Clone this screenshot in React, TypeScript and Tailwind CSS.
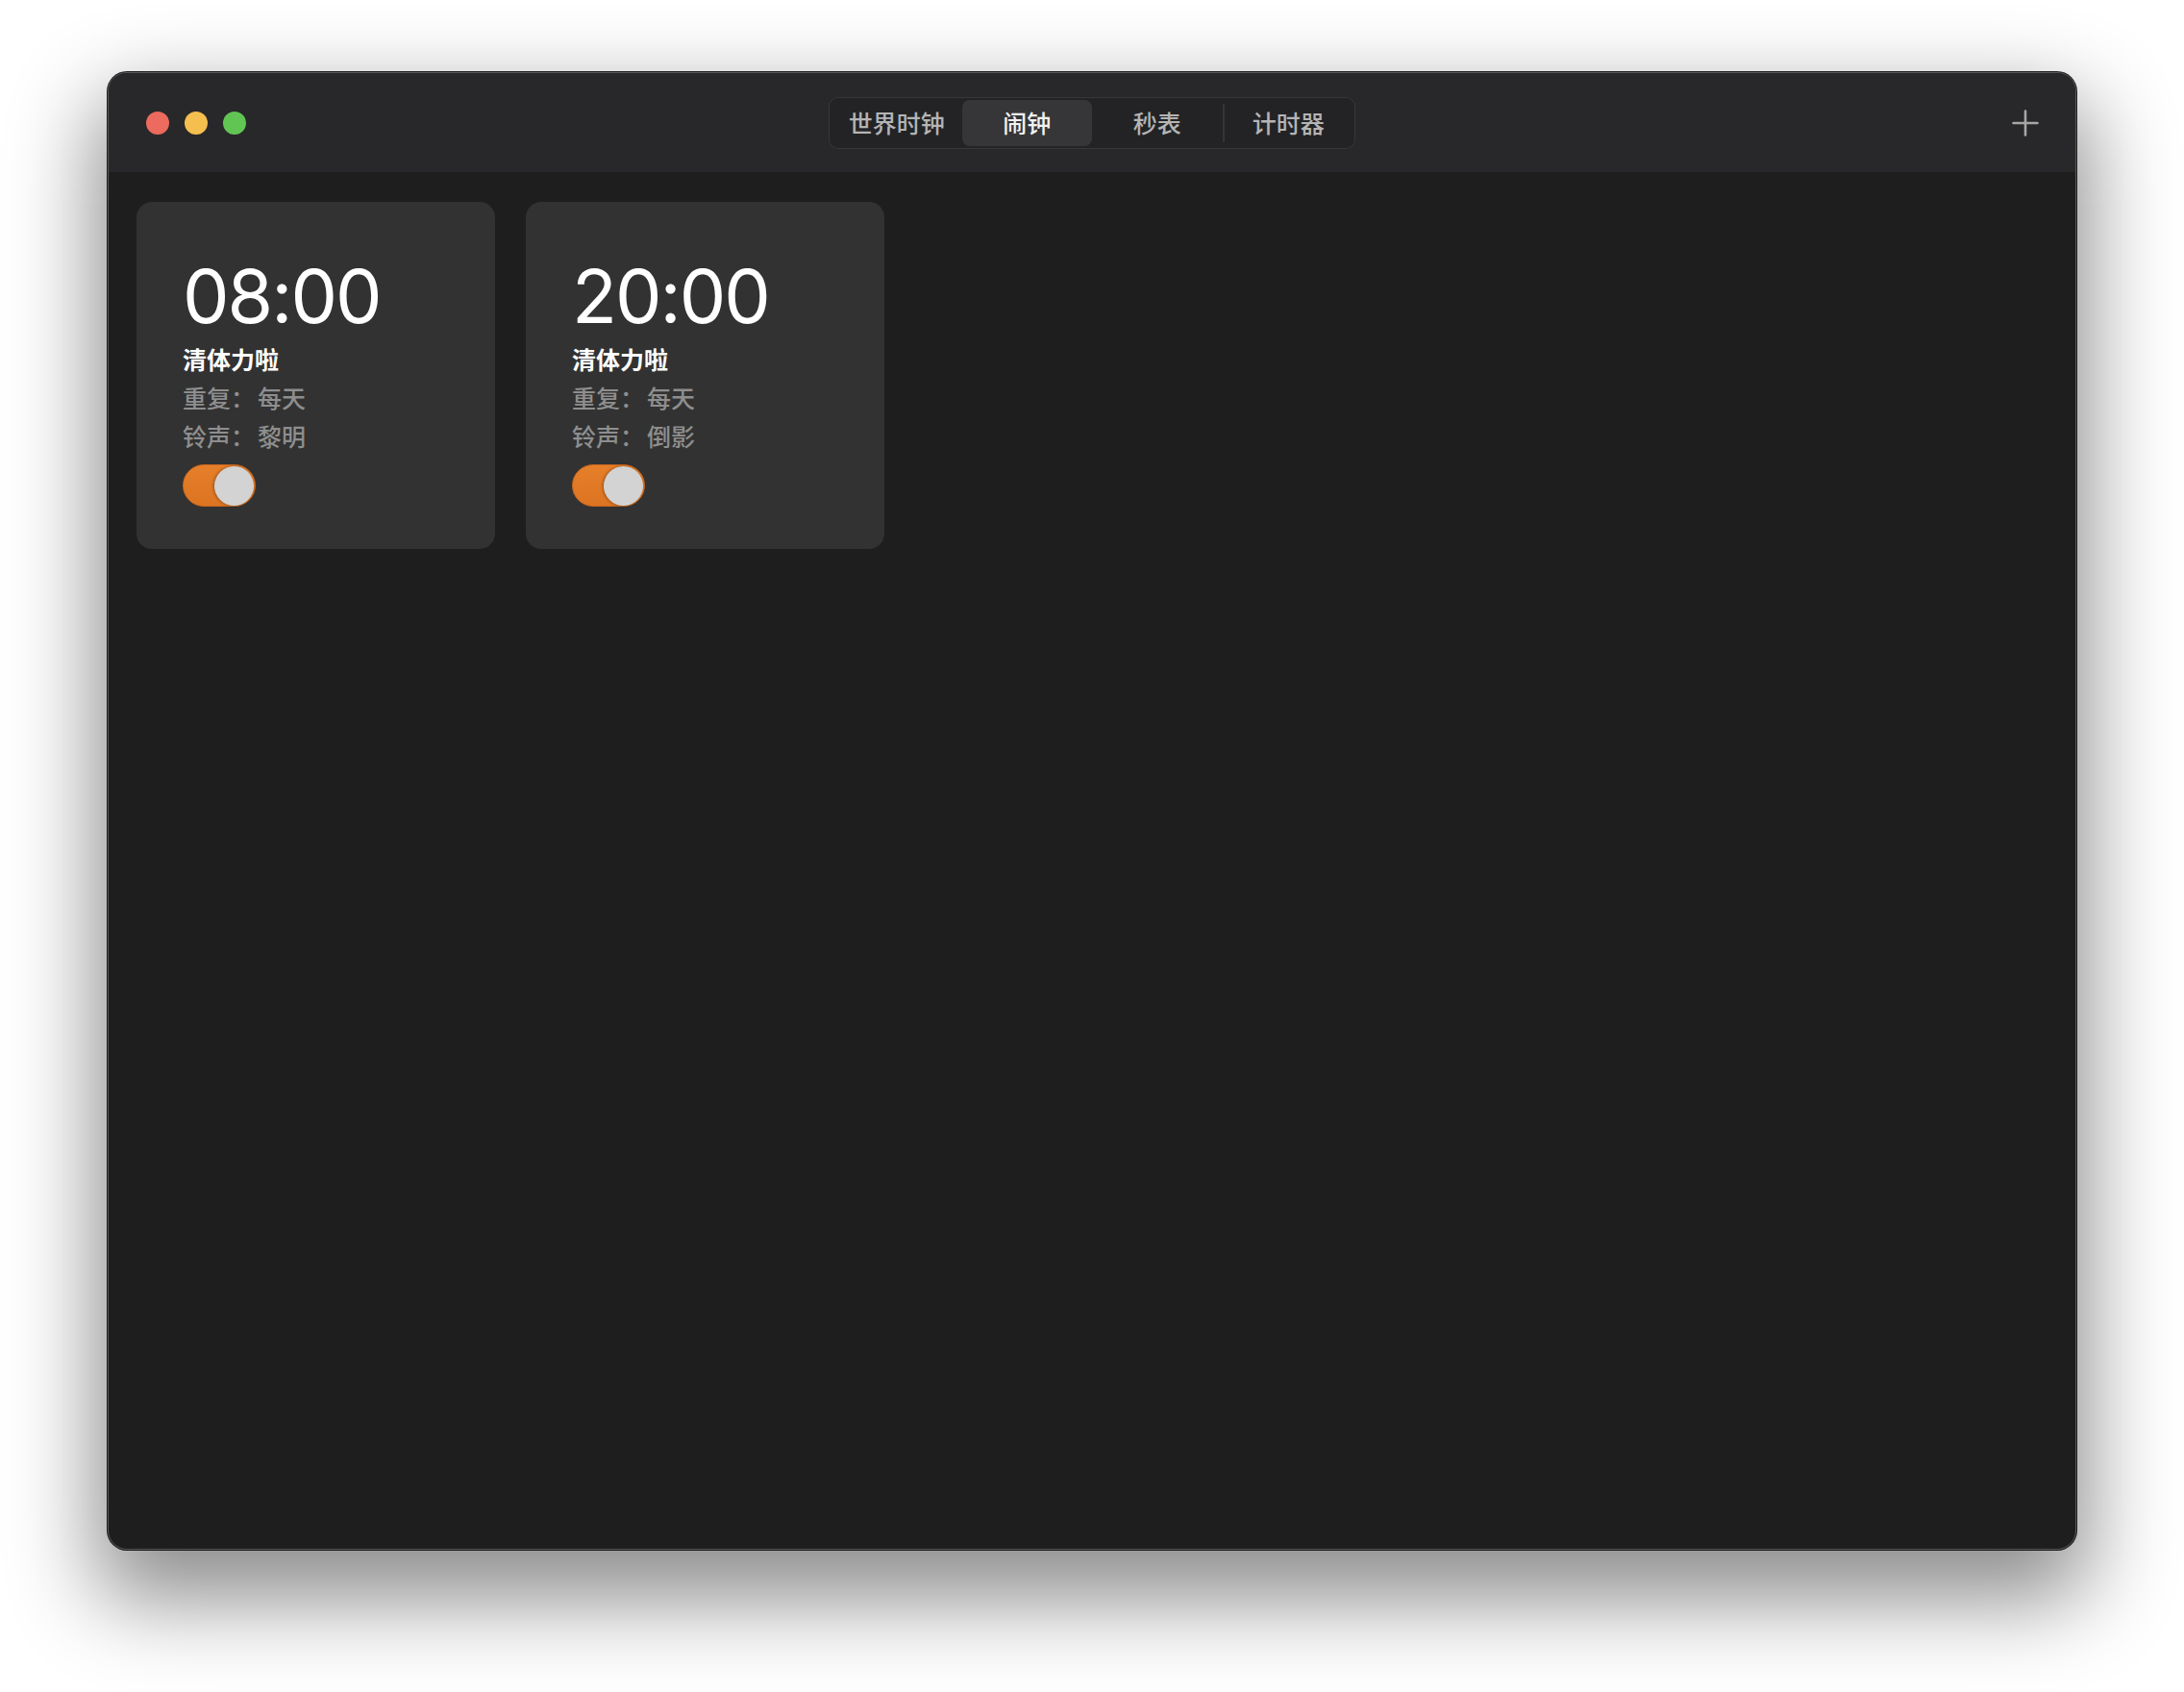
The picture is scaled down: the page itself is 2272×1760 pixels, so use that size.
import React from "react";

const cjk = { fontFamily: '"Noto Sans CJK SC", "Noto Sans", sans-serif' };
const num = { fontFamily: 'Inter, "Noto Sans", sans-serif' };

function Toggle() {
  return (
    <div className="mt-[10px] flex h-[44px] w-[76px] items-center justify-end rounded-full border border-[#c8661c] bg-gradient-to-b from-[#e67f2a] to-[#dc7422] pr-[1px]">
      <div className="h-[41px] w-[41px] rounded-full bg-[#d3d3d3] shadow-[-1px_0_3px_rgba(0,0,0,0.35)]" />
    </div>
  );
}

function AlarmCard({ time, name, repeat, sound }: { time: string; name: string; repeat: string; sound: string }) {
  return (
    <div className="flex w-[373px] flex-col rounded-[16px] bg-[#323232] pb-[44px] pl-[48px] pt-[53px]">
      <div className="h-[90px] text-[77px] font-normal leading-[90px] tracking-[-2px] text-white" style={num}>
        {time}
      </div>
      <div className="text-[25px] font-semibold leading-[40px] text-white" style={cjk}>
        {name}
      </div>
      <div className="text-[25px] font-medium leading-[40px] text-[#8e8e8e]" style={cjk}>
        重复：<span className="ml-[3px]">{repeat}</span>
      </div>
      <div className="text-[25px] font-medium leading-[40px] text-[#8e8e8e]" style={cjk}>
        铃声：<span className="ml-[3px]">{sound}</span>
      </div>
      <Toggle />
    </div>
  );
}

export default function App() {
  const tabs = ["世界时钟", "闹钟", "秒表", "计时器"];
  return (
    <div className="min-h-[1760px] w-[2272px] bg-white pl-[112px] pt-[75px]">
      <div className="flex h-[1537px] w-[2048px] flex-col overflow-hidden rounded-[20px] border border-[#585858] bg-[#1e1e1e] shadow-[0_40px_90px_12px_rgba(0,0,0,0.45),0_0_0_1px_rgba(0,0,0,0.85)]">
        <div className="grid h-[103px] shrink-0 grid-cols-[1fr_auto_1fr] items-center bg-[#28282a]">
          <div className="flex items-center gap-[16px] pl-[39px]">
            <div className="h-[24px] w-[24px] rounded-full bg-[#ec6a5e]" />
            <div className="h-[24px] w-[24px] rounded-full bg-[#f4bf4f]" />
            <div className="h-[24px] w-[24px] rounded-full bg-[#61c554]" />
          </div>
          <div className="grid h-[54px] w-[548px] grid-cols-4 rounded-[10px] border border-[#38383a] bg-[#232325] p-[2px]" style={cjk}>
            {tabs.map((t, i) => (
              <div
                key={t}
                className={
                  i === 1
                    ? "flex items-center justify-center rounded-[8px] bg-[#363638] text-[25px] font-medium text-[#f2f2f2]"
                    : i === 3
                    ? "my-[4px] flex items-center justify-center border-l-2 border-[#343436] text-[25px] font-medium text-[#b4b4b4]"
                    : "flex items-center justify-center text-[25px] font-medium text-[#b4b4b4]"
                }
              >
                {t}
              </div>
            ))}
          </div>
          <div className="flex justify-end pr-[38px]">
            <svg width="28" height="28" viewBox="0 0 28 28">
              <path d="M14 1.5V26.5M1.5 14H26.5" stroke="#a6a6a6" strokeWidth="2.6" strokeLinecap="round" />
            </svg>
          </div>
        </div>
        <div className="flex flex-1 items-start gap-[32px] pl-[29px] pt-[31px]">
          <AlarmCard time="08:00" name="清体力啦" repeat="每天" sound="黎明" />
          <AlarmCard time="20:00" name="清体力啦" repeat="每天" sound="倒影" />
        </div>
      </div>
    </div>
  );
}
